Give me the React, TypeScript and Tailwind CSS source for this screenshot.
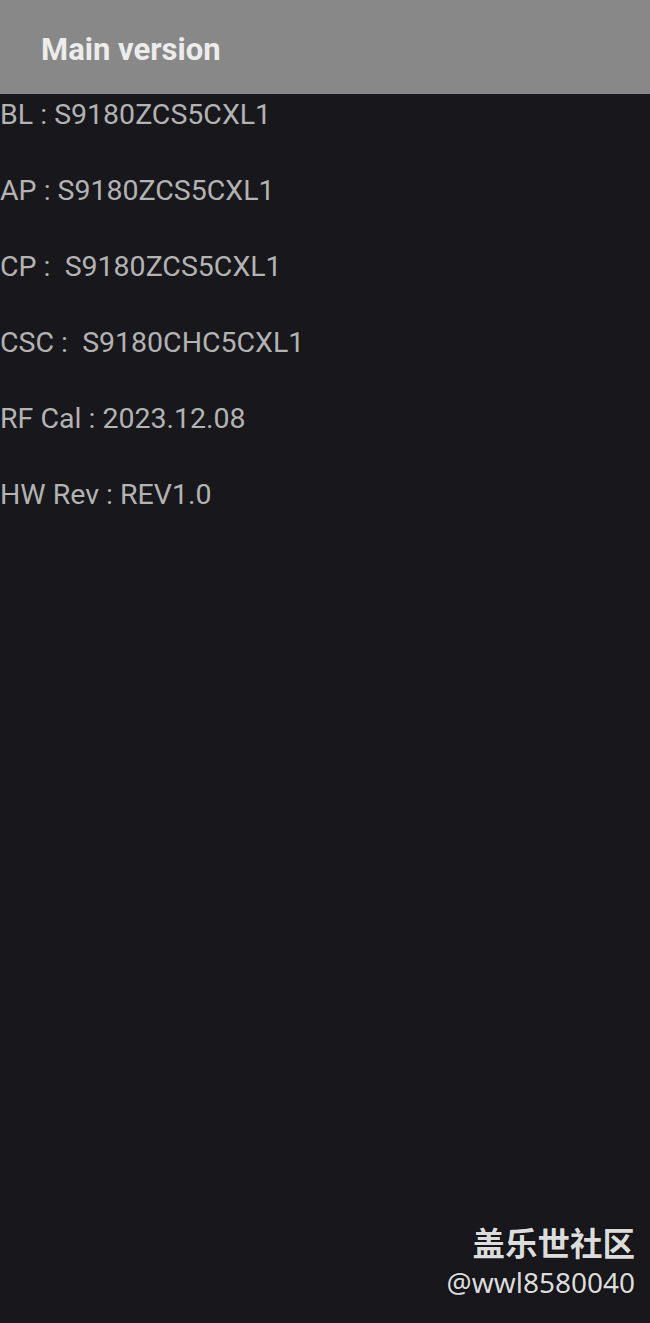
export default function App() {
  const rows = [
    'BL : S9180ZCS5CXL1',
    'AP : S9180ZCS5CXL1',
    'CP :  S9180ZCS5CXL1',
    'CSC :  S9180CHC5CXL1',
    'RF Cal : 2023.12.08',
    'HW Rev : REV1.0',
  ];
  return (
    <div className="w-[650px] h-[1323px] bg-[#18171c] flex flex-col font-['Roboto',sans-serif] overflow-hidden">
      <div className="h-[94px] bg-[#888888] flex items-center pl-[41px] shrink-0">
        <h1 className="text-[31px] font-bold text-[#ececec] leading-none mt-[4px]">Main version</h1>
      </div>
      <div className="flex flex-col -mt-[17px]">
        {rows.map((r) => (
          <div key={r} className="h-[76px] flex items-center text-[28.5px] text-[#b3b3b3] whitespace-pre leading-none">
            {r}
          </div>
        ))}
      </div>
      <div className="mt-auto mb-[20px] pr-[15px] flex flex-col items-end text-[#dcdcdc] [text-shadow:0_0_2px_rgba(0,0,0,0.6)]">
        <div className="text-[32.5px] font-bold leading-[41px] font-['Noto_Sans_CJK_SC',sans-serif]">盖乐世社区</div>
        <div className="text-[28px] leading-[41px] font-['Noto_Sans',sans-serif]">@wwl8580040</div>
      </div>
    </div>
  );
}
